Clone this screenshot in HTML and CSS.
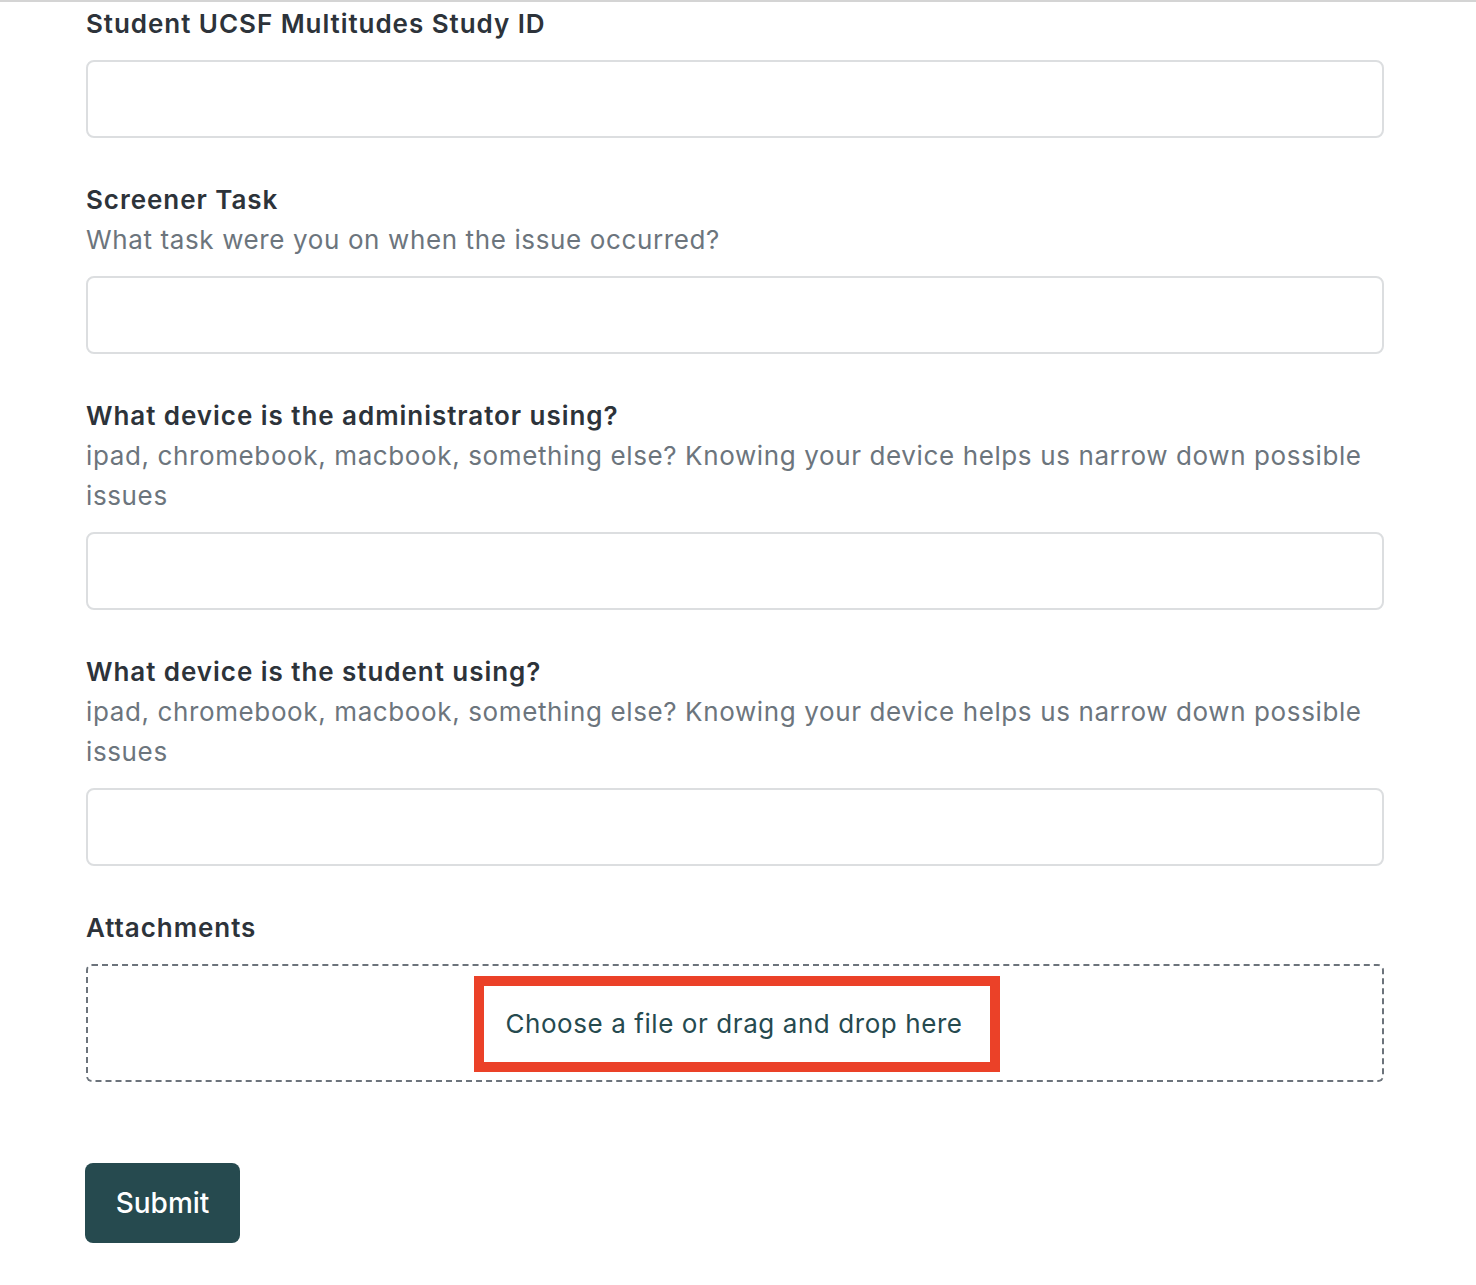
FILE: index.html
```html
<!DOCTYPE html>
<html lang="en">
<head>
    <meta charset="UTF-8">
    <meta name="viewport" content="width=device-width, initial-scale=1.0">
    <title>Report an Issue</title>
    <link rel="stylesheet" href="styles.css">
</head>
<body>
    <div class="page">
        <form class="issue-form">
            <div class="field">
                <label class="field-label" for="studyId">Student UCSF Multitudes Study ID</label>
                <input class="text-input" id="studyId" type="text">
            </div>

            <div class="field">
                <label class="field-label" for="task">Screener Task</label>
                <div class="field-help">What task were you on when the issue occurred?</div>
                <input class="text-input" id="task" type="text">
            </div>

            <div class="field">
                <label class="field-label" for="adminDevice">What device is the administrator using?</label>
                <div class="field-help">ipad, chromebook, macbook, something else? Knowing your device helps us narrow down possible issues</div>
                <input class="text-input" id="adminDevice" type="text">
            </div>

            <div class="field">
                <label class="field-label" for="studentDevice">What device is the student using?</label>
                <div class="field-help">ipad, chromebook, macbook, something else? Knowing your device helps us narrow down possible issues</div>
                <input class="text-input" id="studentDevice" type="text">
            </div>

            <div class="field">
                <div class="field-label">Attachments</div>
                <div class="dropzone">
                    <span class="dropzone-text">Choose a file or drag and drop here</span>
                </div>
            </div>

            <button class="submit-btn" type="submit">Submit</button>
        </form>
    </div>
</body>
</html>
```

FILE: styles.css
```css
body {
    margin: 0;
    font-family: Inter, 'Noto Sans', sans-serif;
    background-color: #fff;
    color: #2d333a;
}
.page {
    border-top: 2px solid #d4d4d4;
    padding: 2px 92px 40px 86px;
}
.issue-form {
    display: flex;
    flex-direction: column;
}
.field {
    display: flex;
    flex-direction: column;
    margin-bottom: 42px;
}
.field-label {
    font-size: 26px;
    line-height: 40px;
    font-weight: 600;
    letter-spacing: 0.95px;
    color: #2d333a;
}
.field-help {
    font-size: 26px;
    line-height: 40px;
    letter-spacing: 0.62px;
    color: #6c757d;
}
.text-input {
    margin-top: 16px;
    height: 78px;
    box-sizing: border-box;
    border: 2px solid #dcdee0;
    border-radius: 8px;
    font-size: 26px;
    padding: 0 20px;
    font-family: inherit;
}
.dropzone {
    margin-top: 16px;
    height: 118px;
    box-sizing: border-box;
    border: 2px dashed #6c737b;
    border-radius: 6px;
    display: flex;
    align-items: center;
    justify-content: center;
}
.dropzone-text {
    font-size: 26px;
    line-height: 40px;
    letter-spacing: 0.58px;
    color: #264a4f;
    padding: 18px 27px 18px 21px;
    border: 10px solid #eb4128;
    margin-left: 4px;
    margin-top: 2px;
}
.submit-btn {
    align-self: flex-start;
    margin-top: 39px;
    width: 155px;
    height: 80px;
    margin-left: -1px;
    border: none;
    border-radius: 8px;
    background-color: #264a4f;
    color: #fff;
    font-family: inherit;
    font-size: 28px;
    font-weight: 500;
    cursor: pointer;
}
```
